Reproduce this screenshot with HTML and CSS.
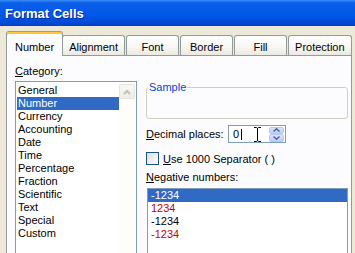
FILE: index.html
```html
<!DOCTYPE html>
<html lang="en">
  <head>
    <meta charset="UTF-8" />
    <title>Format Cells</title>
    <link rel="stylesheet" href="styles.css">
  </head>
  <body>
    <div class="titlebar">Format Cells</div>
    <div class="tabs">
      <div class="tab active">Number</div>
      <div class="tab">Alignment</div>
      <div class="tab">Font</div>
      <div class="tab">Border</div>
      <div class="tab">Fill</div>
      <div class="tab">Protection</div>
    </div>
    <div class="panel">
      <div class="category">
        <div class="field-label"><u>C</u>ategory:</div>
        <div class="listbox">
          <ul class="items">
            <li>General</li>
            <li class="sel">Number</li>
            <li>Currency</li>
            <li>Accounting</li>
            <li>Date</li>
            <li>Time</li>
            <li>Percentage</li>
            <li>Fraction</li>
            <li>Scientific</li>
            <li>Text</li>
            <li>Special</li>
            <li>Custom</li>
          </ul>
          <div class="vscroll">
            <div class="scroll-up">
              <svg width="8" height="6" viewBox="0 0 8 6"><polyline points="1,5 4,2 7,5" fill="none" stroke="#c3c1b3" stroke-width="2"/></svg>
            </div>
          </div>
        </div>
      </div>
      <div class="options">
        <fieldset class="sample">
          <legend>Sample</legend>
          <div class="sample-body"></div>
        </fieldset>
        <div class="decimal-row">
          <span class="row-label"><u>D</u>ecimal places:</span>
          <div class="spin-input">
            <span class="value">0</span><span class="caret"></span>
            <svg class="ibeam" width="9" height="17" viewBox="0 0 9 17">
              <path d="M1 1.5h2c1 0 1.5 .5 1.5 1.5v11c0 1-.5 1.5-1.5 1.5H1M8 1.5H6c-1 0-1.5 .5-1.5 1.5M4.5 14c0 1 .5 1.5 1.5 1.5h2" fill="none" stroke="#000" stroke-width="1"/>
            </svg>
            <div class="spin">
              <div class="spin-btn">
                <svg width="7" height="4" viewBox="0 0 7 4"><polyline points="0.5,3.5 3.5,0.8 6.5,3.5" fill="none" stroke="#4d6185" stroke-width="1.4"/></svg>
              </div>
              <div class="spin-btn">
                <svg width="7" height="4" viewBox="0 0 7 4"><polyline points="0.5,0.5 3.5,3.2 6.5,0.5" fill="none" stroke="#4d6185" stroke-width="1.4"/></svg>
              </div>
            </div>
          </div>
        </div>
        <div class="check-row">
          <span class="checkbox"></span>
          <span><u>U</u>se 1000 Separator ( )</span>
        </div>
        <div class="field-label neg-label"><u>N</u>egative numbers:</div>
        <ul class="neg-list">
          <li class="sel">-1234</li>
          <li class="red">1234</li>
          <li>-1234</li>
          <li class="red">-1234</li>
        </ul>
      </div>
    </div>
  </body>
</html>
```
FILE: styles.css
```css
body {
  margin: 0;
  width: 355px;
  height: 253px;
  overflow: hidden;
  background-color: #ece9d8;
  font-family: "Liberation Sans", Arial, sans-serif;
  font-size: 11px;
  color: #000;
}
.titlebar {
  height: 26px;
  box-sizing: border-box;
  padding: 6px 0 0 5px;
  font-weight: bold;
  font-size: 13px;
  line-height: 15px;
  color: #fff;
  text-shadow: 1px 1px #0b2a9a;
  background: linear-gradient(#3a8cf8 0, #0a5ee9 3px, #0058e8 60%, #0049d6 88%, #003fbf 100%);
}
.tabs {
  display: flex;
  align-items: flex-end;
  height: 30px;
  padding-left: 8px;
  margin-bottom: -1px;
  position: relative;
  z-index: 1;
}
.tab {
  height: 20px;
  box-sizing: border-box;
  min-width: 53px;
  padding: 5px 6px 0;
  margin: 0 1px 1px 0;
  border: 1px solid #919b9c;
  border-bottom: none;
  border-radius: 3px 3px 0 0;
  background: linear-gradient(#ffffff, #f7f6f2 60%, #ebe9e0);
  text-align: center;
  line-height: 13px;
}
.tab.active {
  height: 25px;
  padding: 9px 8px 0;
  margin: 0 -1px 0 -2px;
  border-top: 1px solid #e68b2c;
  box-shadow: inset 0 2px 0 #ffc83c;
  background: #fcfcfe;
}
.panel {
  margin: 0 3px 0 6px;
  height: 230px;
  border: 1px solid #919b9c;
  background: #fcfcfe;
  display: flex;
  gap: 9px;
  padding: 9px 0 0 8px;
}
.category {
  width: 122px;
}
.field-label {
  height: 13px;
  line-height: 13px;
}
.listbox {
  margin-top: 3px;
  height: 200px;
  border: 1px solid #7f9db9;
  background: #fff;
  display: flex;
}
.items {
  list-style: none;
  margin: 0;
  padding: 2px 0 0 1px;
  flex: 1;
}
.items li, .neg-list li {
  height: 13px;
  line-height: 13px;
  padding-left: 1px;
  white-space: nowrap;
}
.sel {
  background: #316ac5;
  color: #fff;
}
.vscroll {
  width: 17px;
  background: #fdfdfa;
}
.scroll-up {
  margin: 2px 1px 0 0;
  height: 15px;
  box-sizing: border-box;
  border: 1px solid #e6e4da;
  border-radius: 2px;
  background: linear-gradient(#f9f8f4, #efede5);
  display: flex;
  align-items: center;
  justify-content: center;
}
.options {
  flex: 1;
  margin-right: 3px;
  display: flex;
  flex-direction: column;
}
.sample {
  margin: 16px 0 0;
  padding: 0;
  border: 1px solid #d0d0bf;
  border-radius: 3px;
  min-width: 0;
}
.sample legend {
  margin-left: 1px;
  padding: 0 1px;
  line-height: 13px;
  color: #0046d5;
}
.sample-body {
  height: 24px;
}
.decimal-row {
  display: flex;
  align-items: center;
  margin-top: 6px;
  height: 18px;
}
.row-label {
  width: 82px;
}
.spin-input {
  position: relative;
  width: 58px;
  height: 18px;
  box-sizing: border-box;
  border: 1px solid #7f9db9;
  background: #fff;
  display: flex;
  align-items: center;
  padding-left: 4px;
}
.caret {
  width: 1px;
  height: 11px;
  margin-left: 2px;
  background: #000;
}
.ibeam {
  position: absolute;
  left: 24px;
  top: 0;
}
.spin {
  margin-left: auto;
  margin-right: 1px;
  width: 15px;
  height: 15px;
  display: flex;
  flex-direction: column;
}
.spin-btn {
  flex: 1;
  border: 1px solid #b7c9f2;
  border-radius: 2px;
  background: linear-gradient(#d9e4fd, #bccefa);
  display: flex;
  align-items: center;
  justify-content: center;
}
.check-row {
  display: flex;
  align-items: center;
  gap: 4px;
  margin-top: 9px;
  height: 13px;
}
.checkbox {
  width: 13px;
  height: 13px;
  box-sizing: border-box;
  border: 1px solid #1c5180;
  background: linear-gradient(135deg, #dcdcd7, #ffffff);
}
.neg-label {
  margin-top: 6px;
}
.neg-list {
  list-style: none;
  margin: 4px 0 0 1px;
  padding: 0;
  height: 70px;
  border: 1px solid #7f9db9;
  background: #fff;
}
.neg-list li {
  padding-left: 3px;
}
.neg-list .red {
  color: #cc0000;
}
```
